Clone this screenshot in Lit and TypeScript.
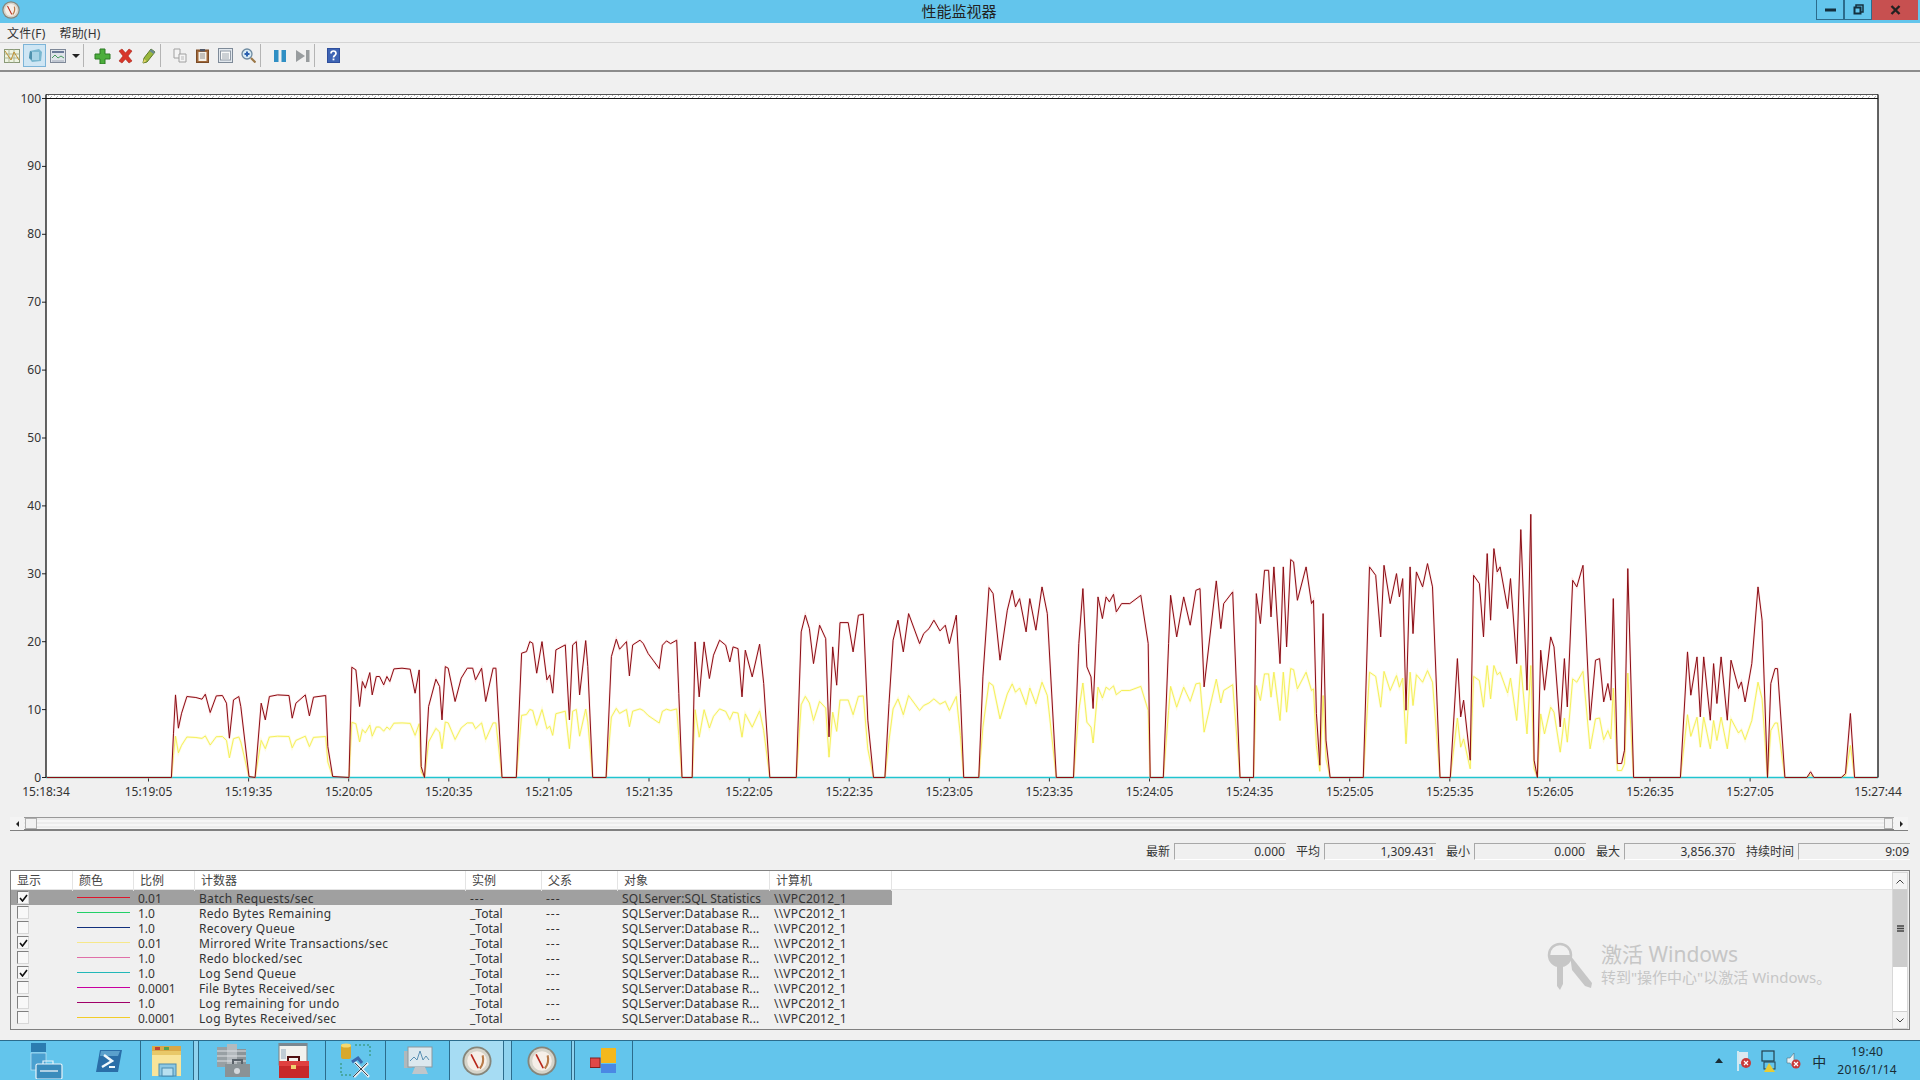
import {LitElement, css, html, svg} from 'lit'
import {customElement} from 'lit/decorators.js'

// plot box in page pixels, the svg starts at y=72
const PLOT_LEFT = 46
const PLOT_RIGHT = 1878
const CHART_TOP = 72
const Y0 = 777.5 - CHART_TOP
const Y100 = 98.5 - CHART_TOP
const unit = (Y0 - Y100) / 100

// red trace, read off the reference as [x, value*20.38] in three stretches
const A = [115,0, 420,0, 425,133, 430,248, 437,148, 445,193, 458,243, 480,240, 495,235, 503,250, 515,195, 530,245, 545,246, 555,223, 562,118, 572,233, 585,243, 590,213, 610,3, 625,0, 640,223, 650,173, 660,243, 680,248, 708,246, 716,178, 725,223, 748,248, 758,185, 768,241, 798,246, 803,93, 815,3, 855,0, 862,331, 872,323, 881,213, 888,288, 895,268, 906,315, 912,248, 922,303, 930,303, 940,278, 948,303, 955,288, 965,326, 985,328, 1005,325, 1017,253, 1027,323, 1032,33, 1040,0, 1050,213, 1068,295, 1077,273, 1083,173, 1091,333, 1098,328, 1115,228, 1130,298, 1145,328, 1158,328, 1165,293, 1180,328, 1190,228, 1208,328, 1215,328, 1230,0, 1265,0, 1278,373, 1290,378, 1298,408, 1305,403, 1315,313, 1328,408, 1340,293, 1347,308, 1354,253, 1362,383, 1385,398, 1395,173, 1403,398, 1412,408, 1420,248, 1435,411, 1440,333, 1452,0, 1485,0, 1498,363, 1510,415, 1518,385, 1535,408, 1542,305, 1550,398]
const B = [0,412, 8,402, 20,372, 32,352, 47,327, 55,397, 65,410, 75,402, 90,412, 95,252, 103,0, 128,0, 135,407, 145,242, 157,407, 170,297, 180,367, 195,412, 210,397, 220,347, 228,392, 240,387, 250,242, 258,382, 275,302, 293,400, 303,282, 318,0, 383,0, 395,437, 405,487, 415,447, 425,342, 440,457, 455,417, 463,122, 472,392, 482,277, 490,465, 510,465, 522,377, 535,487, 547,490, 558,172, 572,0, 600,0, 610,222, 620,412, 632,472, 645,377, 658,492, 685,402, 695,432, 708,447, 720,472, 735,440, 748,457, 758,402, 775,487, 785,252, 793,0, 830,0, 840,302, 855,570, 865,552, 882,352, 900,502, 912,562, 920,512, 930,537, 946,437, 955,537, 970,442, 985,572, 998,492, 1020,0, 1062,0, 1075,402, 1085,567, 1095,332, 1105,302, 1110,207, 1122,542, 1133,477, 1142,542, 1150,527, 1160,550, 1167,497, 1180,522, 1200,522, 1227,547, 1245,402, 1250,0, 1282,0, 1295,402, 1300,547, 1315,422, 1332,542, 1348,457, 1362,562, 1372,567, 1382,272, 1412,590, 1423,447, 1430,522, 1452,557, 1470,0, 1503,0, 1510,552, 1520,462, 1530,622, 1540,622, 1546,482, 1553,632]
const C = [24,342, 32,632, 40,392, 50,654, 57,647, 66,532, 87,632, 100,522, 105,532, 112,192, 120,37, 128,492, 135,112, 145,0, 225,0, 240,632, 255,607, 267,422, 275,637, 290,522, 305,612, 312,542, 320,597, 328,202, 338,632, 345,432, 353,617, 368,572, 380,642, 392,572, 410,0, 435,0, 452,357, 460,182, 467,232, 483,52, 491,607, 505,582, 515,422, 524,672, 532,472, 540,687, 548,617, 555,632, 573,507, 580,597, 595,342, 605,744, 620,262, 629,790, 637,52, 645,0, 653,382, 662,262, 677,422, 685,392, 700,152, 710,357, 717,212, 730,592, 740,572, 755,637, 772,172, 785,352, 795,357, 805,227, 815,282, 822,232, 828,537, 838,42, 848,42, 855,82, 863,627, 877,0, 990,0, 1007,377, 1015,247, 1030,362, 1038,182, 1046,362, 1062,172, 1070,342, 1078,222, 1088,362, 1103,172, 1112,352, 1130,267, 1137,287, 1146,227, 1162,342, 1177,572, 1187,472, 1200,0, 1208,282, 1218,327, 1224,327, 1242,0, 1295,0, 1304,17, 1312,0, 1378,0, 1388,12, 1400,192, 1410,0, 1465,0]

const stretch = (pts: number[], x0: number, sx: number) => {
  const out: [number, number][] = []
  for (let i = 0; i < pts.length; i += 2) out.push([x0 + pts[i] / sx, pts[i + 1] / 20.38])
  return out
}
const trace = [...stretch(A, 0, 2.45), ...stretch(B, 640, 2.45), ...stretch(C, 1270, 2.412)]
const toY = (v: number) => Y0 - v * unit
const redPts = trace.map(([x, v]) => `${x.toFixed(1)},${toY(v).toFixed(1)}`).join(' ')
const yellowPts = trace.map(([x, v]) => `${x.toFixed(1)},${toY(Math.min(v / 2, 16.5)).toFixed(1)}`).join(' ')

const xLabels = ['15:19:05','15:19:35','15:20:05','15:20:35','15:21:05','15:21:35','15:22:05','15:22:35','15:23:05','15:23:35','15:24:05','15:24:35','15:25:05','15:25:35','15:26:05','15:26:35','15:27:05']

const rows = [
  {on: true, color: '#e0142c', scale: '0.01', name: 'Batch Requests/sec', inst: '---', obj: 'SQLServer:SQL Statistics', sel: true},
  {on: false, color: '#22d068', scale: '1.0', name: 'Redo Bytes Remaining', inst: '_Total', obj: 'SQLServer:Database R...'},
  {on: false, color: '#12307c', scale: '1.0', name: 'Recovery Queue', inst: '_Total', obj: 'SQLServer:Database R...'},
  {on: true, color: '#f6e88a', scale: '0.01', name: 'Mirrored Write Transactions/sec', inst: '_Total', obj: 'SQLServer:Database R...'},
  {on: false, color: '#e070a8', scale: '1.0', name: 'Redo blocked/sec', inst: '_Total', obj: 'SQLServer:Database R...'},
  {on: true, color: '#22b8b8', scale: '1.0', name: 'Log Send Queue', inst: '_Total', obj: 'SQLServer:Database R...'},
  {on: false, color: '#c800a0', scale: '0.0001', name: 'File Bytes Received/sec', inst: '_Total', obj: 'SQLServer:Database R...'},
  {on: false, color: '#a00068', scale: '1.0', name: 'Log remaining for undo', inst: '_Total', obj: 'SQLServer:Database R...'},
  {on: false, color: '#f2cc28', scale: '0.0001', name: 'Log Bytes Received/sec', inst: '_Total', obj: 'SQLServer:Database R...'},
]

const stats = [['最新', '0.000'], ['平均', '1,309.431'], ['最小', '0.000'], ['最大', '3,856.370'], ['持续时间', '9:09']]

const gauge = (s: number) => html`<svg width=${s} height=${s} viewBox="0 0 32 32">
  <circle cx="16" cy="16" r="15.500" fill="#85857a"/>
  <circle cx="16" cy="16" r="13.500" fill="#d6d4ca"/>
  <circle cx="16" cy="16" r="10.500" fill="#f6efe8"/>
  <path d="M10 9.500 17 23" stroke="#b8281c" stroke-width="1.800" stroke-linecap="round"/>
  <path d="M22 10Q24 18 19 24" stroke="#b87a48" stroke-width="2.200" fill="none"/>
</svg>`

const ico = (w: number, h: number, body: unknown) => html`<svg width=${w} height=${h} viewBox="0 0 ${w} ${h}">${body}</svg>`

const toolIcons = {
  graph: ico(16, 14, svg`<rect x=".5" y=".5" width="15" height="13" fill="#eef4e2" stroke="#8a9a78"/><path d="M.5 5h15M.5 9h15M5 .5v13M10 .5v13" stroke="#b0b898"/><path d="M1 2 7 11 10 3 15 11" stroke="#c09030" fill="none"/>`),
  hist: ico(16, 15, svg`<path d="M3 3 12 1 15 4 14 13 5 14 2 10Z" fill="#7ab8d0"/><path d="M5 4h7v8H5z" fill="#a8d4e6"/><path d="M3 3 5 4v8L2 10Z" fill="#4e90ac"/>`),
  report: ico(16, 14, svg`<rect x=".5" y=".5" width="15" height="13" fill="#dfe4ea" stroke="#7e8898"/><rect x="2" y="2" width="12" height="2" fill="#6a7a98"/><path d="M2 9l3-3 3 3 3-2 3 2" stroke="#4a9a60" fill="none"/><path d="M2 12h12" stroke="#a0a8b8"/>`),
  add: ico(17, 16, svg`<path d="M6 1h5v5h5v5h-5v5H6v-5H1V6h5z" fill="#4cae3c" stroke="#2c7a24"/>`),
  del: ico(17, 16, svg`<path d="M2 3 5 1 8.500 5 12 1 15 3 11 8 15 13 12 15 8.500 11 5 15 2 13 6 8Z" fill="#d8362a" stroke="#a82418" stroke-width=".6"/>`),
  edit: ico(14, 16, svg`<path d="M9 1 13 4 5 14 1 15 2 10Z" fill="#9ab83c" stroke="#5e7a28"/><path d="M1 15 2 11 4.500 13Z" fill="#e8d46c"/><path d="M9 1 13 4 11.500 6 7.500 3Z" fill="#6a8a90"/>`),
  copy: ico(14, 15, svg`<path d="M1 1h6v9H1z" fill="#f4f4f4" stroke="#a0a0a0"/><path d="M6 6h7v8H6z" fill="#f4f4f4" stroke="#a0a0a0"/><path d="M8 9h3M8 11h3" stroke="#b8b8b8"/>`),
  paste: ico(13, 15, svg`<rect x=".5" y="2" width="12" height="12.500" fill="#a0683a" stroke="#7a4c28"/><rect x="2.500" y="4" width="8" height="9" fill="#f6f2ea"/><rect x="4" y="1" width="5" height="2.500" fill="#505868"/><path d="M4 6h5M4 8h5M4 10h5" stroke="#909090"/>`),
  props: ico(15, 15, svg`<rect x=".5" y=".5" width="14" height="14" fill="#e2e8ee" stroke="#7e8a98"/><rect x="2.500" y="3" width="10" height="9" fill="#f8f8f8" stroke="#8e98a4"/><path d="M4 6h7M4 8h7M4 10h7" stroke="#a0a8b0"/>`),
  zoom: ico(15, 15, svg`<circle cx="6" cy="6" r="5" fill="#d8ecf6" stroke="#6e8aa0" stroke-width="1.300"/><path d="M3.500 6h5M6 3.500v5" stroke="#2a60b0" stroke-width="2"/><path d="M10 10 14.500 14.500" stroke="#9c7848" stroke-width="2.200"/>`),
  pause: ico(14, 14, svg`<rect x="1" y="1" width="4.500" height="12" fill="#2f8fc4"/><rect x="8.500" y="1" width="4.500" height="12" fill="#2f8fc4"/>`),
  step: ico(15, 14, svg`<path d="M1 1 10 7 1 13Z" fill="#989c9e"/><rect x="11" y="1" width="3.500" height="12" fill="#989c9e"/>`),
  help: ico(13, 15, svg`<rect width="13" height="15" fill="#2e4e9c"/><rect x="1" y="1" width="11" height="13" fill="#3e64b4"/><path d="M4 5.500Q4 3 6.500 3T9 5.500C9 7.500 6.500 7.500 6.500 9.500" stroke="#fff" stroke-width="1.700" fill="none"/><rect x="5.600" y="10.500" width="1.800" height="1.800" fill="#fff"/>`),
}

const taskIcons = {
  server: ico(33, 36, svg`<rect x="1" y="0" width="15" height="9" fill="#2b7cb0"/><rect x="1" y="10" width="15" height="17" fill="#4aa0d0" stroke="#d8eef8" stroke-width=".6"/><rect x="6" y="21" width="26" height="15" rx="1.500" fill="#3a8cbc" stroke="#e8f4fa" stroke-width="1.200"/><path d="M13 21v-3h10v3" stroke="#e8f4fa" fill="none" stroke-width="1.200"/><path d="M10 28h18" stroke="#fff" stroke-width="1.200"/>`),
  shell: ico(28, 24, svg`<path d="M5 1H27L23 23H1Z" fill="#2a6ea8"/><path d="M6 2H25L23 7H5Z" fill="#5aa0cc"/><path d="M9 6 17 12 7 18" stroke="#f0f8fc" stroke-width="2.500" fill="none"/><path d="M14 18h6" stroke="#f0f8fc" stroke-width="2"/>`),
  folder: ico(32, 34, svg`<path d="M1 2H30V32H1Z" fill="#e8c868"/><path d="M1 2H30V7H1Z" fill="#d8a848"/><rect x="4" y="3" width="5" height="3" fill="#c04030"/><rect x="13" y="3" width="5" height="3" fill="#50a050"/><path d="M1 11H30V32H1Z" fill="#f8e49a"/><rect x="8" y="20" width="17" height="12" fill="#8cc8e4" stroke="#4a8cb0"/><rect x="11" y="24" width="11" height="8" fill="#b8e0f0" stroke="#4a8cb0"/>`),
  gears: ico(35, 34, svg`<rect x="2" y="3" width="10" height="20" fill="#98a0a4"/><rect x="12" y="0" width="10" height="22" fill="#b4babe"/><rect x="22" y="5" width="9" height="17" fill="#8c9498"/><path d="M2 7h29M2 12h29M2 17h29" stroke="#dde0e4"/><path d="M10 20H35V33H10Z" fill="#8a9296"/><path d="M18 20v-4h9v4" stroke="#5a626a" fill="none" stroke-width="2"/><circle cx="22" cy="27" r="3" fill="#d4d8dc"/>`),
  toolbox: ico(31, 36, svg`<rect x="1" y="0" width="28" height="22" fill="#f2f2ee" stroke="#808080"/><rect x="1" y="0" width="28" height="3" fill="#7a8890"/><rect x="3" y="6" width="5" height="10" fill="#c0ccd4"/><path d="M1 18H31V35H1Z" fill="#c8282a"/><path d="M1 18H31V23H1Z" fill="#e04040"/><path d="M10 18v-4h11v4" stroke="#501010" fill="none" stroke-width="2"/><rect x="13" y="22" width="5" height="4" fill="#f0d070"/>`),
  db: ico(34, 36, svg`<rect x="2" y="1" width="10" height="15" rx="2" fill="#d8a82c"/><ellipse cx="7" cy="2.500" rx="5" ry="2" fill="#f4d870"/><path d="M16 2h15v13M2 20v12h10" stroke="#2c8a5c" stroke-dasharray="2 2" fill="none"/><path d="M15 34 29 20M16 19 30 34" stroke="#e8ecf0" stroke-width="2.600"/><path d="M14 34 28 20M16 20 29 33" stroke="#3c4650" stroke-width="1"/><path d="M13 19 19 15 23 20" stroke="#3a6ab0" stroke-width="3" fill="none"/>`),
  monitor: ico(30, 32, svg`<rect x="1" y="6" width="8" height="17" fill="#b0b8bc"/><rect x="5" y="2" width="24" height="20" fill="#dce8ee" stroke="#8c989e"/><path d="M7 16l4-4 3 3 3-9 3 9 3-4 3 4" stroke="#5a90b4" fill="none"/><path d="M12 22h10l3 7H9Z" fill="#c0c6ca"/>`),
  windows: ico(27, 25, svg`<rect x="0" y="10" width="10" height="9.500" fill="#e04848" stroke="#802020"/><rect x="11" y="0" width="15" height="15" fill="#f4b81c"/><rect x="11" y="16" width="15" height="9" fill="#4a88e4"/>`),
}

const tray = {
  flag: ico(15, 22, svg`<path d="M1 1v20" stroke="#f4f4f4" stroke-width="1.500"/><path d="M2 2h9v12H2z" fill="#dce8f0"/><circle cx="9" cy="13" r="5" fill="#c83a3a"/><path d="M7 11l4 4m0-4-4 4" stroke="#fff" stroke-width="1.200"/>`),
  net: ico(16, 22, svg`<rect x="1" y="1" width="12" height="10" fill="none" stroke="#23404e" stroke-width="1.200"/><rect x="3" y="12" width="11" height="7" fill="none" stroke="#23404e"/><path d="M8 13 14 22H3Z" fill="#e8cc34"/>`),
  sound: ico(15, 22, svg`<path d="M1 8h3l4-5v15l-4-5H1Z" fill="#e8f2f6" stroke="#507080" stroke-width=".6"/><circle cx="10" cy="14" r="4.500" fill="#c83a3a"/><path d="M8 12l4 4m0-4-4 4" stroke="#fff" stroke-width="1.200"/>`),
}

@customElement('app-root')
export class AppRoot extends LitElement {
  static styles = css`
    :host {
      display: block;
      width: 1920px;
      height: 1080px;
      overflow: hidden;
      position: relative;
      background: #f0f0f0;
      color: #333;
      font-family: 'Noto Sans', 'Noto Sans CJK SC', sans-serif;
      font-size: 12px;
    }

    .title {
      height: 23px;
      background: #63c5ec;
      display: flex;
      align-items: flex-start;
      position: relative;
    }
    .title .app-icon {
      margin: 1px 0 0 2px;
      display: flex;
    }
    .title .caption {
      position: absolute;
      left: 0;
      right: 2px;
      top: 0;
      line-height: 22px;
      text-align: center;
      font-size: 15px;
      color: #222;
    }
    .winbtns {
      margin-left: auto;
      margin-right: 2px;
      display: flex;
      height: 20px;
    }
    .winbtn {
      width: 28px;
      display: flex;
      align-items: center;
      justify-content: center;
      border: 1px solid #2c6c8c;
      border-top: 0;
      border-left-width: 1px;
      box-sizing: border-box;
    }
    .winbtn.close {
      width: 46px;
      background: #c75050;
      border: 0;
    }

    .menu {
      height: 20px;
      display: flex;
      gap: 14px;
      padding-left: 7px;
      align-items: center;
      border-bottom: 1px solid #d4d4d4;
      box-sizing: border-box;
      letter-spacing: .2px;
    }

    .toolbar {
      height: 29px;
      display: flex;
      align-items: center;
      padding-bottom: 2px;
      border-bottom: 2px solid #8c8c8c;
      box-sizing: border-box;
    }
    .tool {
      width: 23px;
      height: 23px;
      display: flex;
      align-items: center;
      justify-content: center;
      box-sizing: border-box;
    }
    .tool.active {
      background: #cfe6f4;
      border: 1px solid #7cb4d8;
    }
    .tool.caret {
      width: 14px;
    }
    .caret-tri {
      width: 0;
      height: 0;
      border: 4px solid transparent;
      border-top: 4px solid #222;
      border-bottom: 0;
    }
    .sep {
      width: 1px;
      height: 23px;
      background: #b4b4b4;
      margin-right: 7px;
    }

    .chart {
      display: block;
      height: 745px;
      width: 1920px;
    }
    .chart text {
      font-family: 'Noto Sans', sans-serif;
      font-size: 12px;
      fill: #333;
    }

    .hscroll {
      height: 14px;
      margin-left: 10px;
      width: 1900px;
      display: flex;
      align-items: stretch;
    }
    .arrow-btn {
      width: 14px;
      background: #f4f4f4;
      border-bottom: 1px solid #808080;
      display: flex;
      align-items: center;
      justify-content: center;
      box-sizing: border-box;
    }
    .track {
      flex: 1;
      display: flex;
      justify-content: space-between;
      border-top: 1px solid #999;
      border-bottom: 2px solid #808080;
      background: repeating-linear-gradient(#ececec 0 2px, #f6f6f6 2px 4px);
      padding: 0 1px;
    }
    .thumb {
      background: #f2f2f2;
      border: 1px solid #b0b0b0;
      box-sizing: border-box;
    }
    .thumb.left {
      width: 12px;
    }
    .thumb.right {
      width: 9px;
    }
    .tri-l, .tri-r {
      width: 0;
      height: 0;
      border: 3px solid transparent;
    }
    .tri-l {
      border-right-color: #222;
      border-left: 0;
    }
    .tri-r {
      border-left-color: #222;
      border-right: 0;
    }

    .stats {
      margin: 12px 10px 0 0;
      height: 17px;
      display: flex;
      justify-content: flex-end;
      align-items: stretch;
    }
    .stat {
      display: flex;
      align-items: center;
      gap: 4px;
      margin-left: 10px;
      line-height: 15px;
    }
    .stat .value {
      width: 112px;
      height: 17px;
      line-height: 15px;
      text-align: right;
      box-sizing: border-box;
      border-top: 1px solid #a8a8a8;
      border-left: 1px solid #a8a8a8;
      border-bottom: 1px solid #fff;
      padding-right: 1px;
    }

    .table {
      margin: 10px 0 0 10px;
      width: 1900px;
      height: 160px;
      border: 1px solid #808080;
      box-sizing: border-box;
      display: flex;
      overflow: hidden;
    }
    .grid {
      flex: 1;
      min-width: 0;
    }
    .head, .row {
      display: grid;
      grid-template-columns: 62px 61px 61px 271px 76px 76px 152px 122px;
    }
    .head {
      height: 19px;
      background: #fff;
      border-bottom: 1px solid #e4e4e4;
      line-height: 20px;
      box-sizing: border-box;
    }
    .head > div {
      padding-left: 6px;
      border-right: 1px solid #e4e4e4;
      color: #444;
      white-space: nowrap;
    }
    .row {
      width: 881px;
      height: 15px;
      line-height: 15px;
      white-space: nowrap;
    }
    .row.sel {
      background: #a0a0a0;
    }
    .row > div {
      padding: 1px 0 0 4px;
      height: 15px;
      box-sizing: border-box;
    }
    .row .name {
      letter-spacing: .3px;
    }
    .row .obj {
      letter-spacing: .1px;
    }
    .row .host {
      letter-spacing: .2px;
    }
    .row .dash {
      letter-spacing: 1px;
    }
    .check {
      width: 12px;
      height: 13px;
      margin-left: 2px;
      background: #f8f8f8;
      border-top: 1px solid #808080;
      border-left: 1px solid #808080;
      border-right: 1px solid #d8d8d8;
      border-bottom: 1px solid #d8d8d8;
      box-sizing: border-box;
      display: flex;
      align-items: center;
      justify-content: center;
    }
    .swatch {
      width: 53px;
      height: 1px;
      margin-top: 6px;
    }
    .vscroll {
      width: 16px;
      margin: 1px 1px 0 0;
      display: flex;
      flex-direction: column;
      background: #fff;
      border: 1px solid #d8d8d8;
      box-sizing: border-box;
    }
    .vbtn {
      height: 17px;
      display: flex;
      align-items: center;
      justify-content: center;
      background: #f4f4f4;
      border-bottom: 1px solid #d0d0d0;
      box-sizing: border-box;
    }
    .vbtn.down {
      margin-top: auto;
      border-bottom: 0;
      border-top: 1px solid #d0d0d0;
    }
    .vthumb {
      height: 77px;
      background: #cdcdcd;
      display: flex;
      align-items: center;
      justify-content: center;
    }

    .watermark {
      position: absolute;
      left: 1546px;
      top: 942px;
      display: flex;
      gap: 9px;
      color: #c6c6c6;
      pointer-events: none;
    }
    .watermark .big {
      font-size: 21px;
      line-height: 25px;
    }
    .watermark .small {
      font-size: 15px;
      line-height: 20px;
      white-space: nowrap;
    }

    .taskbar {
      position: absolute;
      left: 0;
      right: 0;
      bottom: 0;
      height: 40px;
      background: #63c5ec;
      border-top: 1px solid #2c6c8c;
      box-sizing: border-box;
      display: flex;
    }
    .task {
      display: flex;
      align-items: center;
      justify-content: center;
      gap: 32px;
      border-right: 1px solid #2c6c8c;
      box-sizing: border-box;
    }
    .task.active {
      background: #a6dcf3;
    }
    .task.thin {
      width: 8px;
      background: #8fd3ef;
    }
    .tray {
      margin-left: auto;
      display: flex;
      align-items: center;
      color: #1a2c34;
      padding-right: 23px;
    }
    .tray .up {
      width: 0;
      height: 0;
      border: 4px solid transparent;
      border-bottom: 5px solid #1a2c34;
      border-top: 0;
      margin-right: 14px;
    }
    .tray svg {
      margin-right: 9px;
    }
    .tray .ime {
      font-size: 14px;
      margin: 0 11px 0 2px;
    }
    .clock {
      text-align: center;
      line-height: 18px;
      letter-spacing: .3px;
    }
  `

  renderChart() {
    const h = Y0 - Y100
    const w = PLOT_RIGHT - PLOT_LEFT
    return html`<svg class="chart" viewBox="0 0 1920 745">
      ${svg`
        <defs>
          <pattern id="hatch" width="6" height="4" patternUnits="userSpaceOnUse">
            <path d="M0 4 4 0" stroke="#999" stroke-width=".8"/>
          </pattern>
        </defs>
        <rect x=${PLOT_LEFT} y=${Y100 - 4} width=${w} height=${h + 4} fill="#fff"/>
        <rect x=${PLOT_LEFT} y=${Y100 - 4} width=${w} height="4" fill="url(#hatch)"/>
        ${Array.from({length: 11}, (_, i) => {
          const y = Y0 - i * 10 * unit
          return svg`
            <path d="M${PLOT_LEFT - 4} ${y}h4" stroke="#222"/>
            <text x=${PLOT_LEFT - 5} y=${y + 4} text-anchor="end">${i * 10}</text>`
        })}
        <text x=${PLOT_LEFT} y=${Y0 + 18} text-anchor="middle">15:18:34</text>
        <text x=${PLOT_RIGHT} y=${Y0 + 18} text-anchor="middle">15:27:44</text>
        ${xLabels.map((t, i) => {
          const x = 148.5 + i * 100.1
          return svg`
            <path d="M${x} ${Y0}v4" stroke="#333"/>
            <text x=${x} y=${Y0 + 18} text-anchor="middle">${t}</text>`
        })}
        <polyline points=${yellowPts} fill="none" stroke="#fbf6a0" stroke-width="2.500" opacity=".35"/>
        <polyline points=${yellowPts} fill="none" stroke="#f4ee4c" stroke-width=".9"/>
        <path d="M${PLOT_LEFT} ${Y0}H${PLOT_RIGHT}" stroke="#20c4d0" stroke-width="1.500"/>
        <polyline points=${redPts} fill="none" stroke="#f8a8a8" stroke-width="2.200" opacity=".35"/>
        <polyline points=${redPts} fill="none" stroke="#8a0c14" stroke-width="1"/>
        <path d="M${PLOT_LEFT} ${Y100 - 4}H${PLOT_RIGHT}" stroke="#555"/>
        <path d="M${PLOT_LEFT} ${Y100}H${PLOT_RIGHT}" stroke="#111"/>
        <path d="M${PLOT_LEFT} ${Y100 - 4}V${Y0}M${PLOT_RIGHT} ${Y100 - 4}V${Y0}" stroke="#111" stroke-width="1.300"/>
      `}
    </svg>`
  }

  render() {
    const t = toolIcons
    return html`
      <div class="title">
        <span class="app-icon">${gauge(18)}</span>
        <span class="caption">性能监视器</span>
        <div class="winbtns">
          <div class="winbtn">${ico(11, 4, svg`<rect width="11" height="3" y=".5" fill="#14303e"/>`)}</div>
          <div class="winbtn">${ico(11, 11, svg`<path d="M3 3V1h7v7H8" fill="none" stroke="#14303e" stroke-width="1.500"/><rect x="1.500" y="3.500" width="6" height="6" fill="none" stroke="#14303e" stroke-width="2"/>`)}</div>
          <div class="winbtn close">${ico(11, 10, svg`<path d="M1.500 1 9.500 9M9.500 1 1.500 9" stroke="#222" stroke-width="2.400"/>`)}</div>
        </div>
      </div>
      <div class="menu"><span>文件(F)</span><span>帮助(H)</span></div>
      <div class="toolbar">
        <div class="tool">${t.graph}</div>
        <div class="tool active">${t.hist}</div>
        <div class="tool">${t.report}</div>
        <div class="tool caret"><span class="caret-tri"></span></div>
        <span class="sep"></span>
        <div class="tool">${t.add}</div>
        <div class="tool">${t.del}</div>
        <div class="tool">${t.edit}</div>
        <span class="sep"></span>
        <div class="tool">${t.copy}</div>
        <div class="tool">${t.paste}</div>
        <div class="tool">${t.props}</div>
        <div class="tool">${t.zoom}</div>
        <span class="sep"></span>
        <div class="tool">${t.pause}</div>
        <div class="tool">${t.step}</div>
        <span class="sep"></span>
        <div class="tool">${t.help}</div>
      </div>
      ${this.renderChart()}
      <div class="hscroll">
        <div class="arrow-btn"><span class="tri-l"></span></div>
        <div class="track"><div class="thumb left"></div><div class="thumb right"></div></div>
        <div class="arrow-btn"><span class="tri-r"></span></div>
        <div style="width:2px"></div>
      </div>
      <div class="stats">
        ${stats.map(([k, v]) => html`<div class="stat"><span>${k}</span><span class="value">${v}</span></div>`)}
      </div>
      <div class="table">
        <div class="grid">
          <div class="head">
            <div>显示</div><div>颜色</div><div>比例</div><div>计数器</div><div>实例</div><div>父系</div><div>对象</div><div>计算机</div>
          </div>
          ${rows.map(r => html`
            <div class="row ${r.sel ? 'sel' : ''}">
              <div><div class="check">${r.on ? ico(9, 8, svg`<path d="M1 4 3.500 7 8 1" stroke="#111" stroke-width="1.600" fill="none"/>`) : ''}</div></div>
              <div><div class="swatch" style="background:${r.color}"></div></div>
              <div>${r.scale}</div>
              <div class="name">${r.name}</div>
              <div class=${r.inst === '---' ? 'dash' : ''}>${r.inst}</div>
              <div class="dash">---</div>
              <div class="obj">${r.obj}</div>
              <div class="host">\\\\VPC2012_1</div>
            </div>`)}
        </div>
        <div class="vscroll">
          <div class="vbtn">${ico(8, 5, svg`<path d="M.5 4.500 4 1 7.500 4.500" stroke="#444" fill="none"/>`)}</div>
          <div class="vthumb">${ico(7, 7, svg`<path d="M0 1h7M0 3.500h7M0 6h7" stroke="#444" stroke-width="1.300"/>`)}</div>
          <div class="vbtn down">${ico(8, 5, svg`<path d="M.5 .5 4 4 7.500 .5" stroke="#444" fill="none"/>`)}</div>
        </div>
      </div>
      <div class="watermark">
        ${ico(46, 50, svg`
          <path d="M26 13 48 41 47 46 41 44 28 28" fill="#c6c6c6" transform="translate(-2 0)"/>
          <circle cx="14" cy="13" r="11" fill="#f0f0f0" stroke="#c6c6c6" stroke-width="2.500"/>
          <path d="M3.500 13h21a10.500 10.500 0 0 1-21 0Z" fill="#c6c6c6"/>
          <path d="M11 22h6v20l-3 6-3-4Z" fill="#c6c6c6"/>`)}
        <div>
          <div class="big">激活 Windows</div>
          <div class="small">转到"操作中心"以激活 Windows。</div>
        </div>
      </div>
      <div class="taskbar">
        <div class="task" style="width:141px;padding-left:12px">${taskIcons.server}${taskIcons.shell}</div>
        <div class="task" style="width:53px">${taskIcons.folder}</div>
        <div class="task thin" style="width:5px"></div>
        <div class="task" style="width:127px;gap:28px">${taskIcons.gears}${taskIcons.toolbox}</div>
        <div class="task" style="width:60px">${taskIcons.db}</div>
        <div class="task" style="width:64px">${taskIcons.monitor}</div>
        <div class="task active" style="width:54px">${gauge(30)}</div>
        <div class="task thin"></div>
        <div class="task" style="width:60px">${gauge(30)}</div>
        <div class="task thin" style="width:3px"></div>
        <div class="task" style="width:58px">${taskIcons.windows}</div>
        <div class="tray">
          <span class="up"></span>
          ${tray.flag}${tray.net}${tray.sound}
          <span class="ime">中</span>
          <div class="clock">19:40<br />2016/1/14</div>
        </div>
      </div>
    `
  }
}
